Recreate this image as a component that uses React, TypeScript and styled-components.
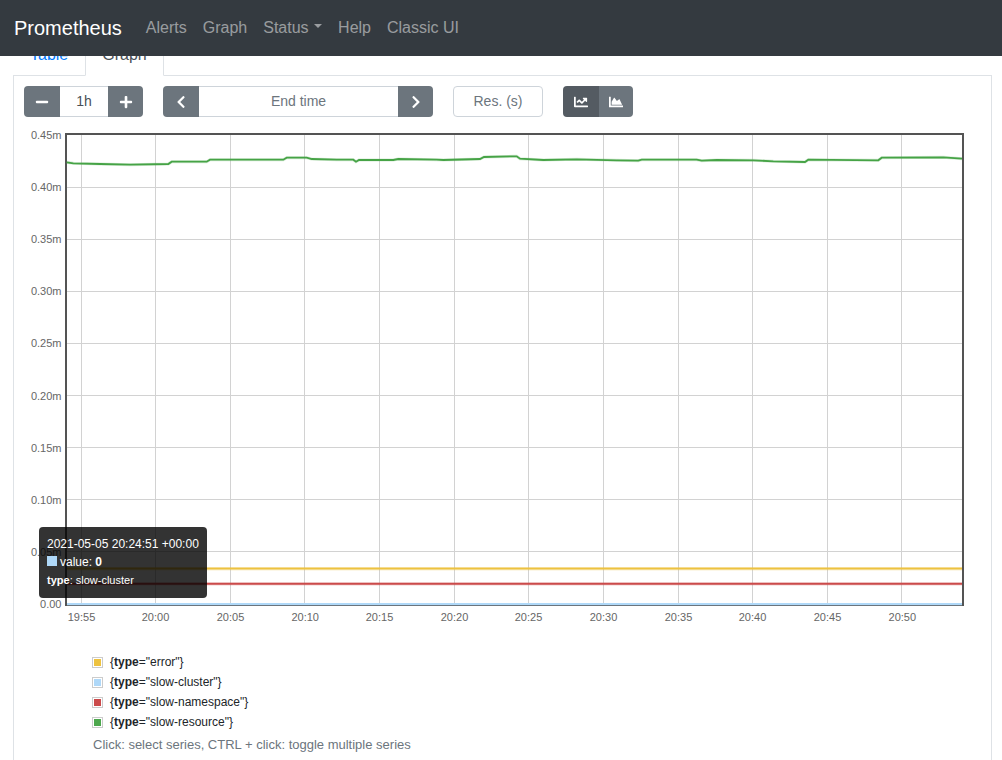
import React from "react";
import styled, { createGlobalStyle } from "styled-components";
import { FaMinus, FaPlus, FaChevronLeft, FaChevronRight, FaChartLine, FaChartArea } from "react-icons/fa";

const Global = createGlobalStyle`
  html, body { margin: 0; height: 760px; overflow: hidden; background: #fff; }
  body { font-family: "Liberation Sans", Arial, sans-serif; font-size: 16px; line-height: 1.5; color: #212529; }
  * { box-sizing: border-box; }
`;

const Navbar = styled.nav`
  position: fixed; top: 0; left: 0; right: 0; z-index: 10;
  height: 56px; background: #343a40; display: flex; align-items: center; padding: 0 16px 0 14px;
`;
const Brand = styled.a`
  color: #fff; font-size: 20px; line-height: 30px; margin-right: 16px;
`;
const NavLink = styled.a`
  color: rgba(255, 255, 255, 0.5); padding: 8px; display: flex; align-items: center;
`;
const Caret = styled.span`
  display: inline-block; margin-left: 5.5px; margin-bottom: 4px; width: 0; height: 0;
  border-top: 4.8px solid currentColor; border-left: 4.8px solid transparent; border-right: 4.8px solid transparent;
`;
const Page = styled.main`
  padding: 34px 10px 0 13px;
`;
const Tabs = styled.div`
  display: flex; height: 41px;
`;
const Tab = styled.a<{ $active?: boolean }>`
  height: 42px; padding: 8px 16px; border: 1px solid ${p => (p.$active ? "#dee2e6" : "transparent")};
  border-bottom-color: ${p => (p.$active ? "#fff" : "transparent")};
  background: ${p => (p.$active ? "#fff" : "transparent")};
  color: ${p => (p.$active ? "#495057" : "#007bff")};
  border-radius: 4px 4px 0 0; position: relative; z-index: 1;
`;
const Panel = styled.section`
  border: 1px solid #dee2e6; padding: 10px 0 40px; height: 720px;
`;
const Toolbar = styled.div`
  display: flex; padding-left: 10px; gap: 20px; height: 31px; margin-bottom: 8px;
`;
const Group = styled.div`
  display: flex; height: 31px;
`;
const IconButton = styled.button<{ $w?: number; $active?: boolean }>`
  width: ${p => p.$w ?? 36}px; height: 31px; padding: 0; border: 0; color: #fff; font-size: 14px;
  background: ${p => (p.$active ? "#545b62" : "#6c757d")};
  display: flex; align-items: center; justify-content: center;
  &:first-child { border-radius: 4px 0 0 4px; }
  &:last-child { border-radius: 0 4px 4px 0; }
`;
const Field = styled.div<{ $w: number; $dark?: boolean; $round?: boolean }>`
  width: ${p => p.$w}px; height: 31px; display: flex; align-items: center; justify-content: center;
  font-size: 14px; color: ${p => (p.$dark ? "#495057" : "#6c757d")};
  border: 1px solid #ced4da; border-left: 0; border-right: 0;
  ${p => p.$round && "border: 1px solid #ced4da; border-radius: 4px;"}
`;
const Chart = styled.div`
  position: relative; height: 510px;
`;
const ChartSvg = styled.svg`
  display: block; width: 977px; height: 510px;
`;
const AxisLabel = styled.text`
  font-family: "Liberation Sans", Arial, sans-serif; font-size: 11px; fill: #666;
`;
const Tooltip = styled.div`
  position: absolute; left: 25px; top: 402px; width: 168px; height: 71px; padding: 8px;
  background: rgba(0, 0, 0, 0.8); border-radius: 4px; color: #fff; font-size: 12px; line-height: 18px; white-space: nowrap;
`;
const TipValue = styled.div`
  display: flex; align-items: center;
`;
const TipSwatch = styled.span`
  width: 10px; height: 10px; background: #afd8f8; margin-right: 3px; margin-bottom: 2px;
`;
const TipLabel = styled.div`
  font-size: 11px;
`;
const Legend = styled.div`
  padding: 17px 0 0 78px; font-size: 12px; line-height: 20px;
`;
const LegendRow = styled.div`
  display: flex; align-items: center; height: 20px;
`;
const Swatch = styled.span`
  width: 11px; height: 11px; border: 1px solid #ccc; padding: 1px; margin-right: 7px; display: block;
`;
const SwatchFill = styled.span<{ $c: string }>`
  display: block; width: 100%; height: 100%; background: ${p => p.$c};
`;
const Hint = styled.div`
  margin: 3px 0 0 1px; font-size: 13px; line-height: 20px; color: #6c757d;
`;

const xTicks: [number, number, string][] = [
  [81, 81.5, "19:55"], [155, 155.5, "20:00"], [230, 230.5, "20:05"], [304, 305.2, "20:10"], [379, 379.5, "20:15"], [454, 454.5, "20:20"],
  [528, 528.5, "20:25"], [603, 603.5, "20:30"], [678, 678.5, "20:35"], [752, 752.5, "20:40"], [827, 827.5, "20:45"], [901, 902.3, "20:50"],
];
const yTicks: [number, number, string][] = [
  [135, 0, "0.45m"], [187, 187, "0.40m"], [239, 239, "0.35m"], [291, 291, "0.30m"], [343, 343, "0.25m"],
  [396, 395, "0.20m"], [448, 447, "0.15m"], [500, 499, "0.10m"], [552, 551, "0.05m"], [604, 0, "0.00"],
];
const green = "66.7,162.3 73.3,163.3 100,164 130,164.7 168.3,164 171.7,161.7 206.7,161.7 210,159.7 283.3,159.7 286.7,157.7 306.7,157.7 311.7,159 336.7,159.7 353.3,159.7 356,161.7 359,160 393.3,160 398.3,159 436.7,159.7 443.3,160 480,159 484,157 513.3,156.3 516.7,156.3 520,158.7 543.3,160 576.7,159.3 616.7,160.3 638.3,160.7 641.7,159.7 696.7,159.7 701.7,160.7 716.7,160 753.3,160.3 773.3,161.3 805,162 808.3,159.7 878.3,160.3 881.7,157.7 943.3,157.3 962,158.7";

const series: [string, string][] = [
  ["error", "#edc240"], ["slow-cluster", "#afd8f8"], ["slow-namespace", "#cb4b4b"], ["slow-resource", "#4da74d"],
];
const flat: [number, string][] = [[568.5, "#edc240"], [583.7, "#cb4b4b"], [604, "#afd8f8"]];

export default function App() {
  return (
    <>
      <Global />
      <Navbar>
        <Brand>Prometheus</Brand>
        <NavLink>Alerts</NavLink>
        <NavLink>Graph</NavLink>
        <NavLink>Status<Caret /></NavLink>
        <NavLink>Help</NavLink>
        <NavLink>Classic UI</NavLink>
      </Navbar>
      <Page>
        <Tabs>
          <Tab>Table</Tab>
          <Tab $active>Graph</Tab>
        </Tabs>
        <Panel>
          <Toolbar>
            <Group>
              <IconButton><FaMinus /></IconButton>
              <Field $w={48} $dark>1h</Field>
              <IconButton $w={35}><FaPlus /></IconButton>
            </Group>
            <Group>
              <IconButton><FaChevronLeft /></IconButton>
              <Field $w={199}>End time</Field>
              <IconButton $w={35}><FaChevronRight /></IconButton>
            </Group>
            <Field $w={90} $round>Res. (s)</Field>
            <Group>
              <IconButton $active><FaChartLine /></IconButton>
              <IconButton $w={34}><FaChartArea /></IconButton>
            </Group>
          </Toolbar>
          <Chart>
            <ChartSvg viewBox="14 125 977 510">
              {xTicks.map(([x]) => (
                <line key={x} x1={x + 0.5} x2={x + 0.5} y1={135} y2={604} stroke="#d2d2d2" />
              ))}
              {yTicks.filter(t => t[1]).map(([, y]) => (
                <line key={y} x1={67} x2={962} y1={y + 0.5} y2={y + 0.5} stroke="#d2d2d2" />
              ))}
              <rect x={66} y={134} width={897} height={471} fill="none" stroke="#545454" strokeWidth={2} />
              {flat.map(([y, c]) => (
                <g key={y}>
                  <line x1={67} x2={962} y1={y + 0.4} y2={y + 0.4} stroke={c} strokeOpacity={0.25} strokeWidth={3} />
                  <line x1={67} x2={962} y1={y} y2={y} stroke={c} strokeWidth={1.9} />
                </g>
              ))}
              <polyline points={green} fill="none" stroke="#4da74d" strokeOpacity={0.22} strokeWidth={3} />
              <polyline points={green} fill="none" stroke="#46a346" strokeWidth={1.8} />
              {yTicks.map(([y, , t]) => (
                <AxisLabel key={t} x={61.5} y={y + 4} textAnchor="end">{t}</AxisLabel>
              ))}
              {xTicks.map(([, lx, t]) => (
                <AxisLabel key={t} x={lx} y={621} textAnchor="middle">{t}</AxisLabel>
              ))}
            </ChartSvg>
            <Tooltip>
              <div>2021-05-05 20:24:51 +00:00</div>
              <TipValue><TipSwatch />value:&nbsp;<b>0</b></TipValue>
              <TipLabel><b>type</b>: slow-cluster</TipLabel>
            </Tooltip>
          </Chart>
          <Legend>
            {series.map(([n, c]) => (
              <LegendRow key={n}>
                <Swatch><SwatchFill $c={c} /></Swatch>
                <span>{"{"}<b>type</b>="{n}"{"}"}</span>
              </LegendRow>
            ))}
            <Hint>Click: select series, CTRL + click: toggle multiple series</Hint>
          </Legend>
        </Panel>
      </Page>
    </>
  );
}
